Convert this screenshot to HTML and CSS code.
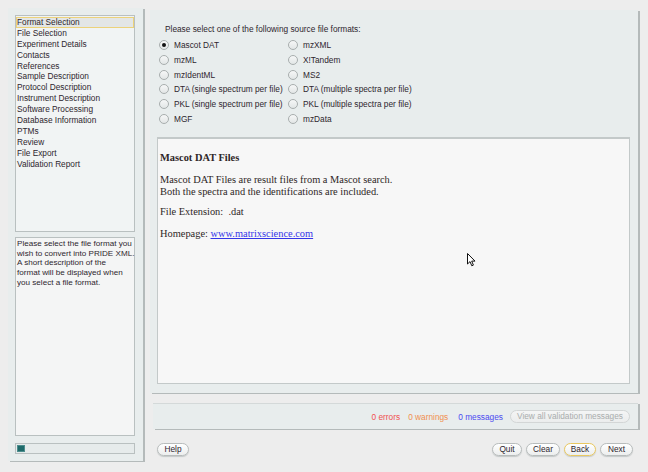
FILE: index.html
```html
<!DOCTYPE html>
<html>
<head>
<meta charset="utf-8">
<link rel="stylesheet" href="styles.css">
</head>
<body>
<div class="app">
  <aside class="side">
    <ul class="steps">
      <li class="active">Format Selection</li>
      <li>File Selection</li>
      <li>Experiment Details</li>
      <li>Contacts</li>
      <li>References</li>
      <li>Sample Description</li>
      <li>Protocol Description</li>
      <li>Instrument Description</li>
      <li>Software Processing</li>
      <li>Database Information</li>
      <li>PTMs</li>
      <li>Review</li>
      <li>File Export</li>
      <li>Validation Report</li>
    </ul>
    <div class="help-text">Please select the file format you<br>wish to convert into PRIDE XML.<br>A short description of the<br>format will be displayed when<br>you select a file format.</div>
    <div class="progress"><div class="progress-fill"></div></div>
  </aside>
  <main class="main">
    <section class="formats">
      <p class="prompt">Please select one of the following source file formats:</p>
      <div class="radios">
        <label class="radio"><span class="dot checked"></span>Mascot DAT</label>
        <label class="radio"><span class="dot"></span>mzXML</label>
        <label class="radio"><span class="dot"></span>mzML</label>
        <label class="radio"><span class="dot"></span>X!Tandem</label>
        <label class="radio"><span class="dot"></span>mzIdentML</label>
        <label class="radio"><span class="dot"></span>MS2</label>
        <label class="radio"><span class="dot"></span>DTA (single spectrum per file)</label>
        <label class="radio"><span class="dot"></span>DTA (multiple spectra per file)</label>
        <label class="radio"><span class="dot"></span>PKL (single spectrum per file)</label>
        <label class="radio"><span class="dot"></span>PKL (multiple spectra per file)</label>
        <label class="radio"><span class="dot"></span>MGF</label>
        <label class="radio"><span class="dot"></span>mzData</label>
      </div>
      <div class="desc">
        <h3>Mascot DAT Files</h3>
        <p>Mascot DAT Files are result files from a Mascot search.<br>Both the spectra and the identifications are included.</p>
        <p>File Extension: &nbsp;.dat</p>
        <p class="home">Homepage: <a href="#">www.matrixscience.com</a></p>
        <svg class="cursor" width="10" height="14" viewBox="0 0 10 14"><path d="M0.5 0.5 L0.5 11 L3 8.6 L4.8 12.8 L6.4 12.1 L4.7 8.1 L8 8.1 Z" fill="#fff" stroke="#111" stroke-width="1" stroke-linejoin="round"/></svg>
      </div>
    </section>
    <section class="validation">
      <span class="err">0 errors</span>
      <span class="warn">0 warnings</span>
      <span class="msg">0 messages</span>
      <button class="btn disabled">View all validation messages</button>
    </section>
    <div class="actions">
      <button class="btn">Help</button>
      <span class="spacer"></span>
      <button class="btn">Quit</button>
      <button class="btn">Clear</button>
      <button class="btn focus">Back</button>
      <button class="btn">Next</button>
    </div>
  </main>
</div>
</body>
</html>
```

FILE: styles.css
```css
* { box-sizing: border-box; }
html, body { margin: 0; padding: 0; }
body {
  width: 648px;
  height: 472px;
  background: #ededed;
  font-family: "Liberation Sans", Arial, sans-serif;
  font-size: 8.3px;
  color: #2e262e;
  overflow: hidden;
}
.app {
  display: flex;
  gap: 7px;
  padding: 8px 10px 0 8px;
}
.side {
  width: 135px;
  height: 453px;
  background: #e8eded;
  box-shadow: 2px 1px 0 #b4baba;
  padding: 7px 8px 0 7px;
  display: flex;
  flex-direction: column;
}
.steps {
  list-style: none;
  margin: 0;
  padding: 1px 0 0;
  height: 217px;
  background: #f1f4f4;
  border: 1px solid #b9c0c0;
}
.steps li {
  height: 10.9px;
  line-height: 10.9px;
  padding-left: 1px;
  white-space: nowrap;
}
.steps li.active {
  background: #e3e6e6;
  outline: 1px solid #ecd27a;
  outline-offset: -1px;
}
.help-text {
  margin-top: 5px;
  height: 199px;
  background: #f4f5f5;
  border: 1px solid #b9c0c0;
  padding: 1px 0 0 1px;
  font-size: 8.1px;
  line-height: 9.7px;
  white-space: nowrap;
}
.progress {
  margin-top: 7px;
  height: 11px;
  background: #e6ebeb;
  border: 1px solid #b9c0c0;
  padding: 1px;
}
.progress-fill {
  width: 8px;
  height: 100%;
  background: #1e6a6a;
  border: 1px solid #4d8d8d;
}
.main {
  flex: 1;
  display: flex;
  flex-direction: column;
}
.formats {
  margin-top: 2px;
  height: 383px;
  background: #e8eded;
  box-shadow: 2px 1px 0 #b4baba;
  padding: 14px 8px 9px 7px;
  display: flex;
  flex-direction: column;
}
.prompt {
  margin: 0 0 0 8px;
  line-height: 11px;
}
.radios {
  display: grid;
  grid-template-columns: 129px auto;
  grid-auto-rows: 14.7px;
  margin: 3px 0 0 2px;
}
.radio {
  display: flex;
  align-items: center;
  white-space: nowrap;
}
.dot {
  width: 10px;
  height: 10px;
  border-radius: 50%;
  border: 1px solid #a8aeae;
  background: linear-gradient(#f6f7f7, #e2e6e6);
  margin-right: 5px;
  position: relative;
  flex: none;
}
.dot.checked::after {
  content: "";
  position: absolute;
  left: 2px;
  top: 2px;
  width: 4px;
  height: 4px;
  border-radius: 50%;
  background: #111;
}
.desc {
  position: relative;
  margin-top: 11px;
  flex: 1;
  background: #f7f7f7;
  border: 1px solid #c3c9c9;
  border-width: 2px 1px 1px 1px;
  padding: 13px 0 0 2px;
  font-family: "Liberation Serif", "Times New Roman", serif;
  font-size: 10.4px;
  color: #2e2626;
}
.desc h3 {
  margin: 0 0 10px;
  font-size: 10.4px;
  line-height: 12px;
  font-weight: bold;
}
.desc p {
  margin: 0 0 8px;
  line-height: 12px;
}
.desc p.home { margin-top: 10px; }
.desc a { color: #3535e8; }
.cursor {
  position: absolute;
  left: 309px;
  top: 114px;
}
.validation {
  margin: 10px 0 0 3px;
  height: 26px;
  background: #e8eded;
  box-shadow: 2px 1px 0 #b4baba;
  border-top: 1px solid #d4d9d9;
  display: flex;
  align-items: center;
  justify-content: flex-end;
  padding-right: 8px;
}
.err { color: #f05050; margin-right: 8px; }
.warn { color: #f09050; margin-right: 10px; }
.msg { color: #4b4bf0; margin-right: 7px; }
.btn {
  font-family: "Liberation Sans", Arial, sans-serif;
  font-size: 8.3px;
  color: #2e262e;
  height: 13px;
  padding: 0 7px;
  border-radius: 7px;
  border: 1px solid #b8bcbc;
  background: linear-gradient(#ffffff, #eceeee);
  box-shadow: 0 1px 1px #c4c8c8;
  line-height: 11px;
}
.btn.disabled {
  color: #a9adad;
  border-color: #d3d6d6;
  background: linear-gradient(#f4f5f5, #ebeded);
  box-shadow: none;
  width: 120px;
  padding: 0;
}
.btn.focus { border-color: #e9c860; }
.actions {
  margin-top: 14px;
  display: flex;
  align-items: center;
  gap: 4px;
  padding: 0 5px 0 7px;
}
.actions .btn:first-child { width: 32px; padding: 0; }
.actions .btn:nth-child(3) { width: 30px; padding: 0; }
.actions .btn:nth-child(4) { width: 34px; padding: 0; }
.actions .btn:nth-child(5) { width: 32px; padding: 0; }
.actions .btn:nth-child(6) { width: 33px; padding: 0; }
.spacer { flex: 1; }
```
